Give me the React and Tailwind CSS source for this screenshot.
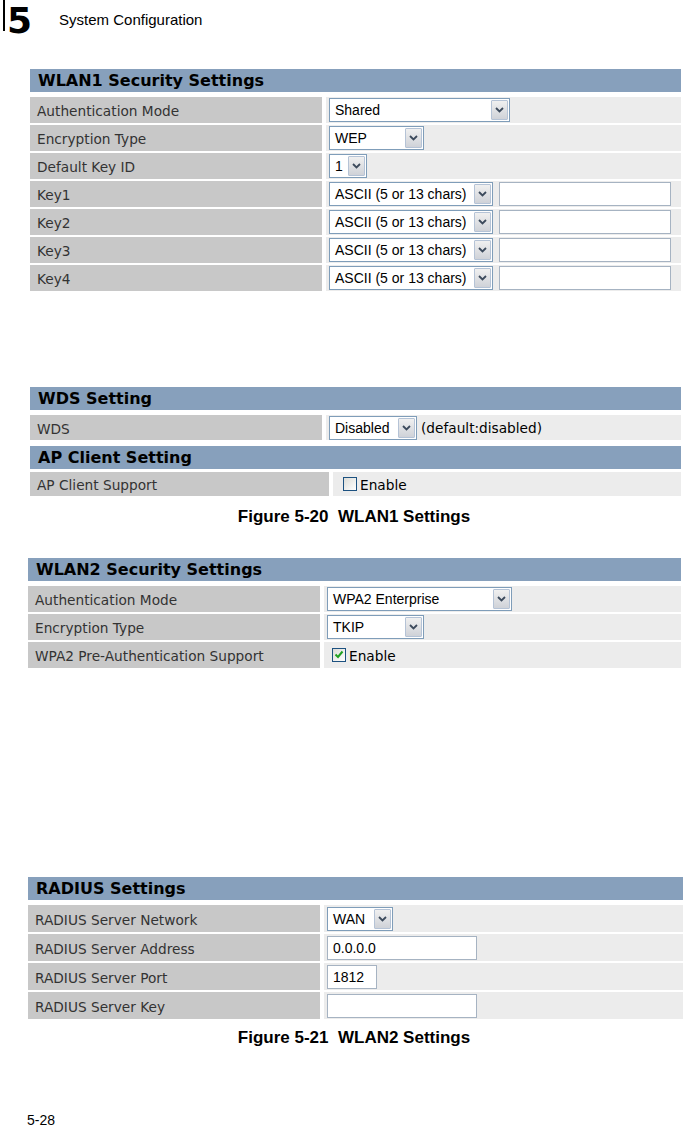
import React from 'react';

const labelFont = { fontFamily: '"DejaVu Sans", Verdana, sans-serif' };

const Arrow = () => (
  <span className="flex items-center justify-center w-[17px] h-[20px] border border-[#b5c3d6] bg-gradient-to-b from-[#f0f0f0] to-[#cfd2d8] rounded-[1px]">
    <svg width="9" height="6" viewBox="0 0 9 6">
      <path d="M1 1 L4.5 4.5 L8 1" fill="none" stroke="#3c4a5c" strokeWidth="1.8" />
    </svg>
  </span>
);

const Select = ({ value, w }) => (
  <div
    className={`flex items-center justify-between h-[24px] bg-white border border-[#7f9db9] pl-[5px] pr-[1px] ${w}`}
  >
    <span className="text-[14px] text-black leading-none font-['Liberation_Sans',Arial,sans-serif] whitespace-nowrap">
      {value}
    </span>
    <Arrow />
  </div>
);

const TextBox = ({ value = '', w }) => (
  <div className={`flex items-center h-[24px] bg-white border border-[#a6b3c2] pl-[5px] ${w}`}>
    <span className="text-[14px] text-black leading-none font-['Liberation_Sans',Arial,sans-serif]">{value}</span>
  </div>
);

const Check = ({ checked }) => (
  <span className="flex items-center justify-center w-[14px] h-[14px] border border-[#1c5180] bg-gradient-to-br from-[#dcdcd7] to-white">
    {checked && (
      <svg width="10" height="9" viewBox="0 0 10 9">
        <path d="M1.5 4.5 L4 7 L8.5 1.5" fill="none" stroke="#21a121" strokeWidth="2" />
      </svg>
    )}
  </span>
);

const Header = ({ title }) => (
  <div className="h-[23px] bg-[#87a0bc] flex items-center pl-[8px]">
    <span className="text-[16px] font-bold text-black leading-[18px] pt-[1px]" style={labelFont}>
      {title}
    </span>
  </div>
);

const Row = ({ label, labelW = 'w-[292px]', h = 'h-[26px]', children }) => (
  <div className={`flex gap-[4px] ${h}`}>
    <div className={`${labelW} shrink-0 bg-[#c8c8c8] flex items-center pl-[7px]`}>
      <span className="text-[13.7px] text-[#333] leading-[16px] pt-[2px]" style={labelFont}>
        {label}
      </span>
    </div>
    <div className="flex-1 bg-[#ececec] flex items-center gap-[6px] pl-[3px]">{children}</div>
  </div>
);

const Caption = ({ children }) => (
  <div className="text-center text-[17px] leading-[20px] font-bold text-black font-['Liberation_Sans',Arial,sans-serif] pl-[25px]">
    {children}
  </div>
);

export default function App() {
  const ascii = (
    <>
      <Select value="ASCII (5 or 13 chars)" w="w-[164px]" />
      <TextBox w="w-[172px]" />
    </>
  );

  return (
    <div className="w-[683px] h-[1128px] bg-white relative overflow-hidden font-['Liberation_Sans',Arial,sans-serif]">
      {/* page header */}
      <div className="flex items-start h-[40px]">
        <span className="ml-[3px] w-[2px] h-[31px] bg-black" />
        <span
          className="ml-[2px] text-[36px] font-bold leading-[42px] text-black"
          style={labelFont}
        >
          5
        </span>
        <span className="ml-[27px] mt-[10px] text-[15px] leading-[20px] text-black">System Configuration</span>
      </div>

      {/* WLAN1 */}
      <div className="mt-[29px] ml-[30px] mr-[2px]">
        <Header title="WLAN1 Security Settings" />
        <div className="mt-[5px] flex flex-col gap-[2px]">
          <Row label="Authentication Mode">
            <Select value="Shared" w="w-[181px]" />
          </Row>
          <Row label="Encryption Type">
            <Select value="WEP" w="w-[95px]" />
          </Row>
          <Row label="Default Key ID">
            <Select value="1" w="w-[38px]" />
          </Row>
          <Row label="Key1">{ascii}</Row>
          <Row label="Key2">{ascii}</Row>
          <Row label="Key3">{ascii}</Row>
          <Row label="Key4">{ascii}</Row>
        </div>
      </div>

      {/* WDS / AP client */}
      <div className="mt-[96px] ml-[30px] mr-[2px]">
        <Header title="WDS Setting" />
        <div className="mt-[5px]">
          <Row label="WDS" h="h-[25px]">
            <Select value="Disabled" w="w-[88px]" />
            <span className="text-[13.7px] text-black ml-[-2px] pt-[2px]" style={labelFont}>
              (default:disabled)
            </span>
          </Row>
        </div>
        <div className="mt-[6px]">
          <Header title="AP Client Setting" />
        </div>
        <div className="mt-[3px]">
          <Row label="AP Client Support" labelW="w-[299px]" h="h-[24px]">
            <span className="ml-[7px] flex items-center gap-[3px]">
              <Check />
              <span className="text-[13.7px] text-black pt-[2px]" style={labelFont}>
                Enable
              </span>
            </span>
          </Row>
        </div>
      </div>

      <div className="mt-[11px]">
        <Caption>Figure 5-20&nbsp;&nbsp;WLAN1 Settings</Caption>
      </div>

      {/* WLAN2 */}
      <div className="mt-[31px] ml-[28px] mr-[2px]">
        <Header title="WLAN2 Security Settings" />
        <div className="mt-[5px] flex flex-col gap-[2px]">
          <Row label="Authentication Mode">
            <Select value="WPA2 Enterprise" w="w-[185px]" />
          </Row>
          <Row label="Encryption Type">
            <Select value="TKIP" w="w-[97px]" />
          </Row>
          <Row label="WPA2 Pre-Authentication Support">
            <span className="ml-[5px] flex items-center gap-[3px]">
              <Check checked />
              <span className="text-[13.7px] text-black pt-[2px]" style={labelFont}>
                Enable
              </span>
            </span>
          </Row>
        </div>
      </div>

      {/* RADIUS */}
      <div className="mt-[209px] ml-[28px]">
        <Header title="RADIUS Settings" />
        <div className="mt-[5px] flex flex-col gap-[2px]">
          <Row label="RADIUS Server Network" h="h-[27px]">
            <Select value="WAN" w="w-[66px]" />
          </Row>
          <Row label="RADIUS Server Address" h="h-[27px]">
            <TextBox value="0.0.0.0" w="w-[150px]" />
          </Row>
          <Row label="RADIUS Server Port" h="h-[27px]">
            <TextBox value="1812" w="w-[50px]" />
          </Row>
          <Row label="RADIUS Server Key" h="h-[27px]">
            <TextBox w="w-[150px]" />
          </Row>
        </div>
      </div>

      <div className="mt-[9px]">
        <Caption>Figure 5-21&nbsp;&nbsp;WLAN2 Settings</Caption>
      </div>

      <div className="absolute left-[27px] top-[1113px] text-[14px] leading-[15px] text-black">5-28</div>
    </div>
  );
}
